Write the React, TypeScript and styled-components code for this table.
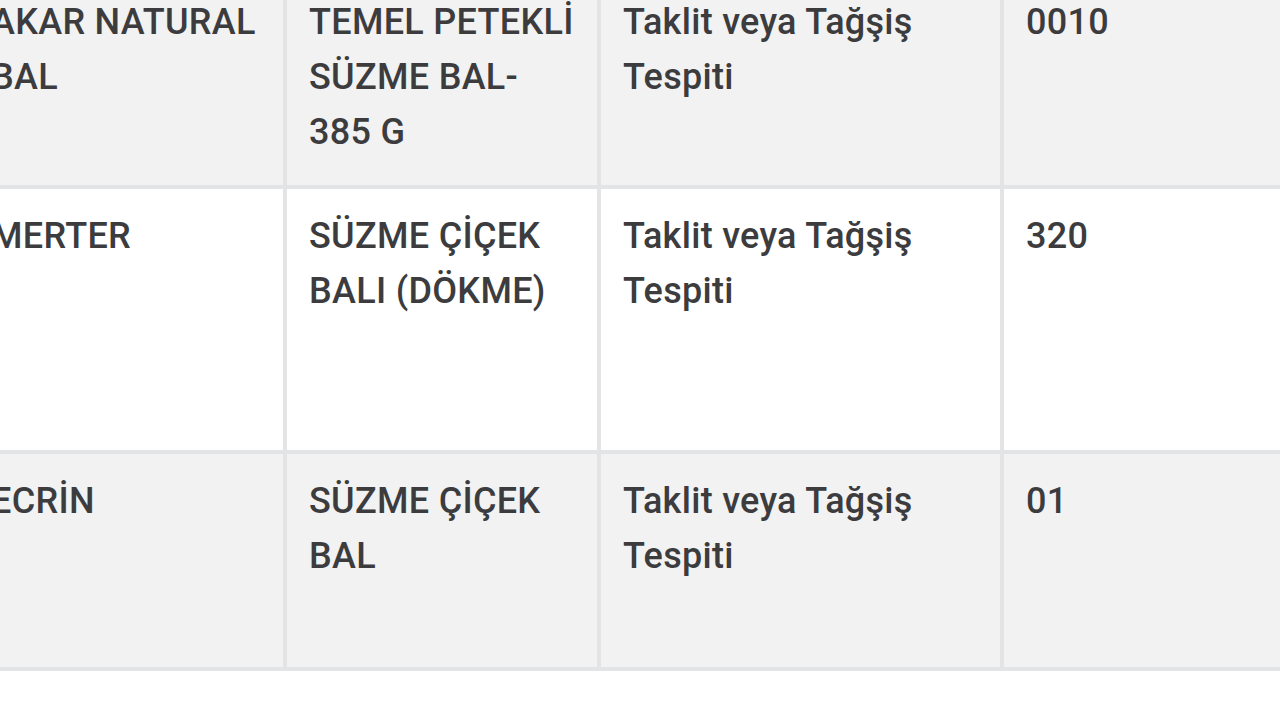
import React from "react";
import styled, { createGlobalStyle } from "styled-components";

const GlobalStyle = createGlobalStyle`
  html, body {
    margin: 0;
    padding: 0;
    background: #ffffff;
    overflow: hidden;
  }
  body {
    width: 1280px;
    height: 720px;
    font-family: Roboto, "Liberation Sans", Arial, sans-serif;
  }
`

const Frame = styled.div`
  width: 1280px;
  height: 720px;
  overflow: hidden;
  background: #ffffff;
`

const Table = styled.div`
  margin-top: -25px;
  margin-left: -26px;
  width: 1340px;
`

const Row = styled.div<{ $shaded: boolean; $height: number }>`
  display: grid;
  grid-template-columns: 313px 314px 403px 1fr;
  height: ${p => p.$height}px;
  box-sizing: border-box;
  background: ${p => (p.$shaded ? "#f2f2f2" : "#ffffff")};
  border-bottom: 4px solid #e3e4e6;
`

const Cell = styled.div`
  box-sizing: border-box;
  padding: 20px 16px 0 22px;
  border-right: 4px solid #e3e4e6;
  font-size: 36px;
  line-height: 55px;
  font-weight: 500;
  letter-spacing: 0.3px;
  color: #3c3c3e;
  white-space: nowrap;
  &:first-child {
    padding-left: 17px;
  }
  &:last-child {
    border-right: none;
  }
`

interface Record {
  brand: string[]
  product: string[]
  finding: string[]
  lot: string[]
  height: number
}

const records: Record[] = [
  {
    brand: ["AKAR NATURAL", "BAL"],
    product: ["TEMEL PETEKLİ", "SÜZME BAL-", "385 G"],
    finding: ["Taklit veya Tağşiş", "Tespiti"],
    lot: ["0010"],
    height: 214
  },
  {
    brand: ["MERTER"],
    product: ["SÜZME ÇİÇEK", "BALI (DÖKME)"],
    finding: ["Taklit veya Tağşiş", "Tespiti"],
    lot: ["320"],
    height: 265
  },
  {
    brand: ["ECRİN"],
    product: ["SÜZME ÇİÇEK", "BAL"],
    finding: ["Taklit veya Tağşiş", "Tespiti"],
    lot: ["01"],
    height: 217
  }
]

function Lines({ lines }: { lines: string[] }) {
  return (
    <>
      {lines.map((line, i) => (
        <React.Fragment key={i}>
          {i > 0 && <br />}
          {line}
        </React.Fragment>
      ))}
    </>
  )
}

function App() {
  return (
    <Frame>
      <GlobalStyle />
      <Table>
        {records.map((r, i) => (
          <Row key={i} $shaded={i % 2 === 0} $height={r.height}>
            <Cell><Lines lines={r.brand} /></Cell>
            <Cell><Lines lines={r.product} /></Cell>
            <Cell><Lines lines={r.finding} /></Cell>
            <Cell><Lines lines={r.lot} /></Cell>
          </Row>
        ))}
      </Table>
    </Frame>
  )
}

export default App
